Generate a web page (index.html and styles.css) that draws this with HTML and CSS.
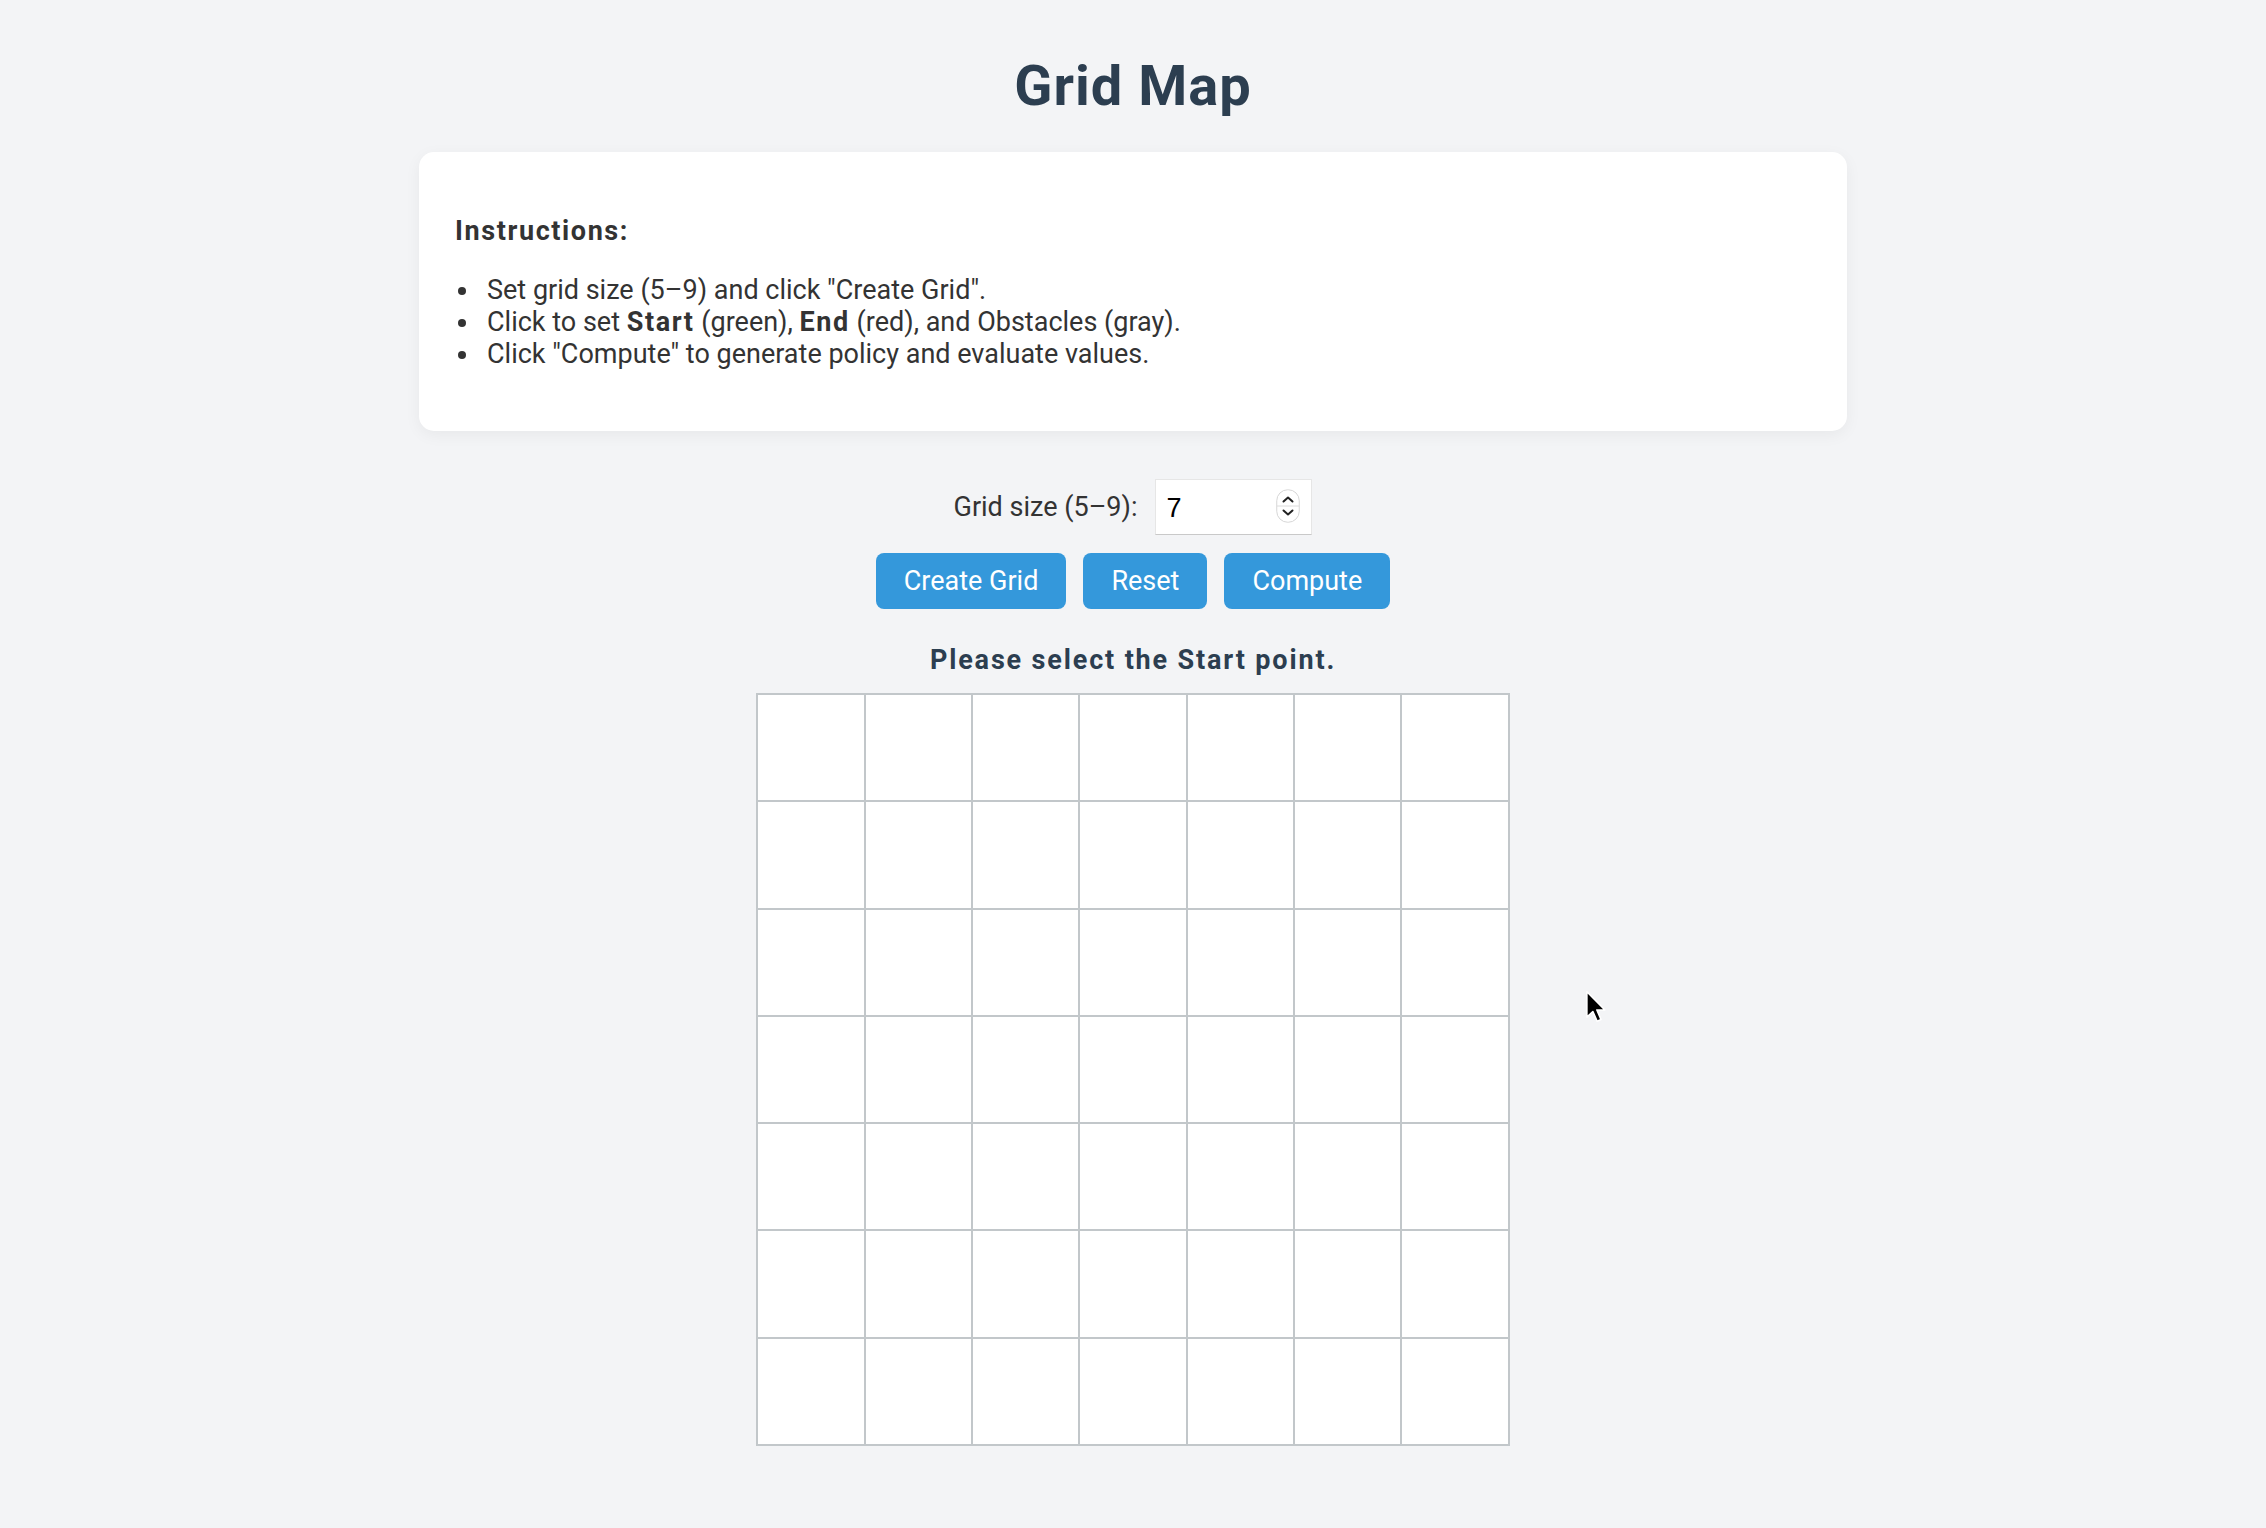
FILE: index.html
```html
<!DOCTYPE html>
<html lang="en">
<head>
<meta charset="utf-8">
<title>Grid Map</title>
<link rel="stylesheet" href="styles.css">
</head>
<body>
<div class="page">
  <h1 class="title">Grid Map</h1>
  <section class="card">
    <h3 class="card-heading">Instructions:</h3>
    <ul class="steps">
      <li>Set grid size (5–9) and click "Create Grid".</li>
      <li>Click to set <strong>Start</strong> (green), <strong>End</strong> (red), and Obstacles (gray).</li>
      <li>Click "Compute" to generate policy and evaluate values.</li>
    </ul>
  </section>

  <div class="size-row">
    <label class="size-label" for="size">Grid size (5–9):</label>
    <div class="input-wrap">
      <input id="size" class="size-input" type="number" min="5" max="9" value="7">
      <svg class="spinner" width="24" height="34" viewBox="0 0 24 34" aria-hidden="true">
        <rect x="0.75" y="0.75" width="22.5" height="32.5" rx="11" fill="#fff" stroke="#d6d6d6" stroke-width="1"/>
        <line x1="1" y1="17" x2="23" y2="17" stroke="#dcdcdc" stroke-width="1"/>
        <path d="M7.5 12.5 L12 8.5 L16.5 12.5" fill="none" stroke="#222" stroke-width="2" stroke-linecap="round" stroke-linejoin="round"/>
        <path d="M7.5 21.5 L12 25.5 L16.5 21.5" fill="none" stroke="#222" stroke-width="2" stroke-linecap="round" stroke-linejoin="round"/>
      </svg>
    </div>
  </div>

  <div class="button-row">
    <button class="btn">Create Grid</button>
    <button class="btn">Reset</button>
    <button class="btn">Compute</button>
  </div>

  <p class="status">Please select the Start point.</p>

  <div class="grid">
    <div class="cell"></div><div class="cell"></div><div class="cell"></div><div class="cell"></div><div class="cell"></div><div class="cell"></div><div class="cell"></div>
    <div class="cell"></div><div class="cell"></div><div class="cell"></div><div class="cell"></div><div class="cell"></div><div class="cell"></div><div class="cell"></div>
    <div class="cell"></div><div class="cell"></div><div class="cell"></div><div class="cell"></div><div class="cell"></div><div class="cell"></div><div class="cell"></div>
    <div class="cell"></div><div class="cell"></div><div class="cell"></div><div class="cell"></div><div class="cell"></div><div class="cell"></div><div class="cell"></div>
    <div class="cell"></div><div class="cell"></div><div class="cell"></div><div class="cell"></div><div class="cell"></div><div class="cell"></div><div class="cell"></div>
    <div class="cell"></div><div class="cell"></div><div class="cell"></div><div class="cell"></div><div class="cell"></div><div class="cell"></div><div class="cell"></div>
    <div class="cell"></div><div class="cell"></div><div class="cell"></div><div class="cell"></div><div class="cell"></div><div class="cell"></div><div class="cell"></div>
  </div>
</div>

<svg class="cursor" width="23" height="34" viewBox="0 0 20 30" aria-hidden="true">
  <path d="M1.5 1.5 L1.5 24 L6.8 19 L10.6 27.6 L14 26.1 L10.3 17.6 L17.4 17.6 Z" fill="#000" stroke="#fff" stroke-width="1.4" stroke-linejoin="round"/>
</svg>
</body>
</html>
```

FILE: styles.css
```css
html, body {
  margin: 0;
  padding: 0;
}

body {
  position: relative;
  min-height: 1528px;
  background: #f3f4f6;
  color: #333333;
  font-family: Roboto, "Liberation Sans", Arial, sans-serif;
  font-size: 27px;
}

.page {
  display: flex;
  flex-direction: column;
  align-items: center;
  padding-top: 16px;
}

.title {
  margin: 37px 0 33px;
  font-size: 56px;
  font-weight: 700;
  line-height: normal;
  letter-spacing: 1px;
  color: #2c3e50;
}

.card {
  box-sizing: border-box;
  width: 1428px;
  padding: 36px 36px;
  background: #ffffff;
  border-radius: 15px;
  box-shadow: 0 4px 16px rgba(0, 0, 0, 0.05);
}

.card-heading {
  margin: 27px 0 27px;
  font-size: 27px;
  font-weight: 700;
  line-height: normal;
  letter-spacing: 1.6px;
}

.steps {
  margin: 27px 0 25px;
  padding-left: 26px;
  line-height: normal;
}

.steps li {
  padding-left: 6px;
}

.steps strong {
  font-weight: 700;
  letter-spacing: 1.6px;
}

.size-row {
  display: flex;
  align-items: center;
  gap: 18px;
  margin-top: 48px;
}

.size-label {
  color: #333333;
}

.input-wrap {
  position: relative;
  width: 157px;
  height: 56px;
}

.size-input {
  box-sizing: border-box;
  width: 157px;
  height: 56px;
  margin: 0;
  padding: 2px 0 0 10px;
  border: 1px solid #e6e6e6;
  border-bottom-color: #c9c9c9;
  border-radius: 0;
  background: #ffffff;
  color: #000000;
  font-family: "Liberation Sans", Arial, sans-serif;
  font-size: 27px;
  outline: none;
  -moz-appearance: textfield;
}

.size-input::-webkit-inner-spin-button,
.size-input::-webkit-outer-spin-button {
  -webkit-appearance: none;
  margin: 0;
}

.spinner {
  position: absolute;
  top: 10px;
  right: 12px;
}

.button-row {
  display: flex;
  gap: 17px;
  margin-top: 18px;
}

.btn {
  height: 56px;
  padding: 0 28px;
  border: none;
  border-radius: 8px;
  background: #3498db;
  color: #ffffff;
  font-family: Roboto, "Liberation Sans", Arial, sans-serif;
  font-size: 27px;
  line-height: 1;
}

.status {
  margin: 35px 0 17px;
  font-size: 27px;
  font-weight: 700;
  line-height: normal;
  color: #2c3e50;
  letter-spacing: 1.85px;
}

.grid {
  display: grid;
  grid-template-columns: repeat(7, 105.3px);
  grid-auto-rows: 105.3px;
  gap: 2px;
  padding: 2px;
  background: #c2c7ca;
}

.cell {
  background: #ffffff;
}

.cursor {
  position: absolute;
  left: 1585px;
  top: 990px;
}
```
